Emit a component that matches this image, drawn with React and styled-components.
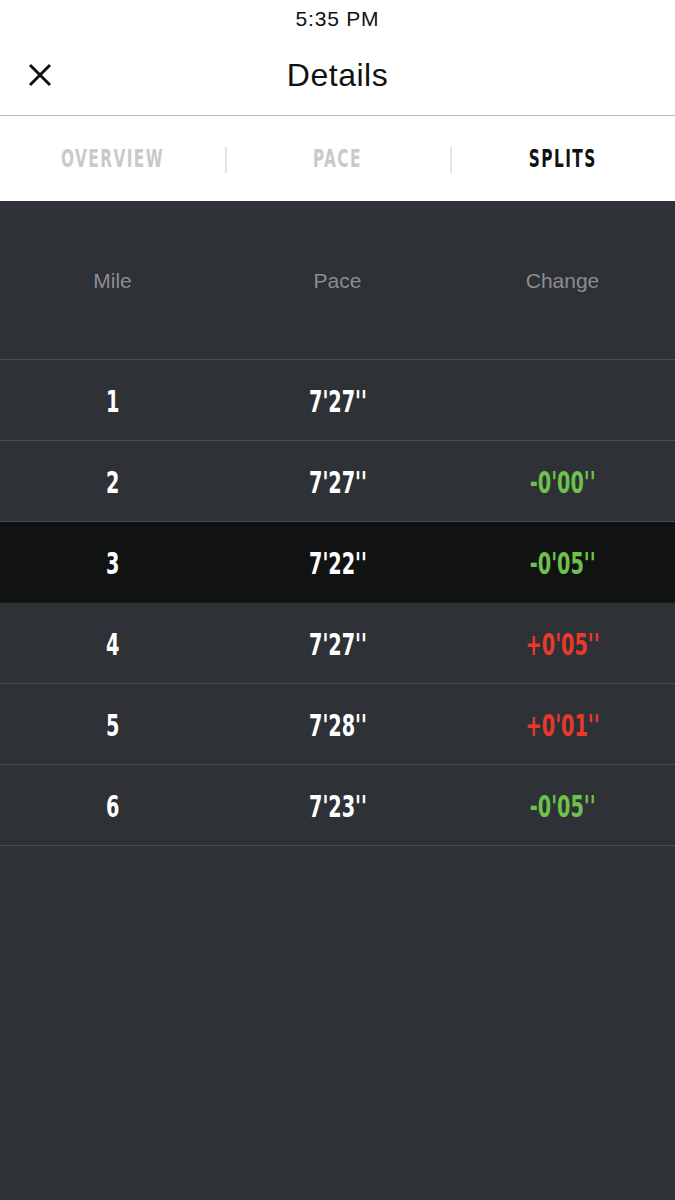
import React, { useState } from "react";
import styled, { createGlobalStyle } from "styled-components";

const GlobalStyle = createGlobalStyle`
  html, body {
    margin: 0;
    padding: 0;
    background: #2e3135;
  }
  body {
    font-family: "Liberation Sans", Arial, sans-serif;
  }
`;

const color = {
  dark: "#2e3135",
  highlight: "#111212",
  line: "#4a4d51",
  muted: "#8b8d90",
  green: "#6cc24a",
  red: "#e83a2b",
};

const Screen = styled.div`
  width: 675px;
  min-height: 1200px;
  display: flex;
  flex-direction: column;
  background: ${color.dark};
`;

const StatusBar = styled.div`
  height: 38px;
  background: #fff;
  display: flex;
  align-items: center;
  justify-content: center;
  font-size: 21px;
  color: #111;
  letter-spacing: 0.8px;
`;

const TopBar = styled.div`
  position: relative;
  height: 77px;
  background: #fff;
  display: flex;
  align-items: center;
  justify-content: center;
  border-bottom: 1px solid #b9b9b9;
`;

const CloseButton = styled.button`
  position: absolute;
  left: 26px;
  top: 23px;
  width: 28px;
  height: 28px;
  padding: 0;
  border: none;
  background: none;
  display: flex;
  align-items: center;
  justify-content: center;
  cursor: pointer;
`;

const Title = styled.h1`
  margin: 0;
  font-size: 32px;
  font-weight: normal;
  color: #111;
  letter-spacing: 0.5px;
  transform: translateY(-1px);
`;

const Tabs = styled.nav`
  height: 85px;
  background: #fff;
  display: grid;
  grid-template-columns: repeat(3, 1fr);
  align-items: center;
`;

const Tab = styled.div`
  position: relative;
  display: flex;
  justify-content: center;
  cursor: pointer;
  color: ${(p) => (p.active ? "#111" : "#c9c9c9")};
  &:not(:first-child):before {
    content: "";
    position: absolute;
    left: 0;
    top: 50%;
    width: 2px;
    height: 26px;
    margin-top: -12px;
    background: #e4e4e4;
  }
`;

const Condensed = styled.span`
  display: inline-block;
  font-family: "DejaVu Sans Condensed", "DejaVu Sans", sans-serif;
  font-weight: bold;
  font-size: ${(p) => p.size || 31}px;
  letter-spacing: ${(p) => p.spacing || 0}px;
  line-height: 1;
  transform: scaleX(${(p) => p.squeeze || 0.69});
  color: ${(p) => p.tone || "inherit"};
`;

const Table = styled.div`
  display: flex;
  flex-direction: column;
`;

const HeadRow = styled.div`
  height: 158px;
  display: grid;
  grid-template-columns: repeat(3, 1fr);
  align-items: center;
  border-bottom: 1px solid ${color.line};
`;

const HeadCell = styled.div`
  text-align: center;
  font-size: 21px;
  color: ${color.muted};
  transform: translateY(1px);
`;

const Row = styled.div`
  height: 80px;
  display: grid;
  grid-template-columns: repeat(3, 1fr);
  align-items: center;
  border-bottom: 1px solid ${(p) => (p.active ? "#1a1b1c" : color.line)};
  background: ${(p) => (p.active ? color.highlight : "transparent")};
  color: #fff;
  cursor: pointer;
`;

const Cell = styled.div`
  display: flex;
  justify-content: center;
  padding-top: 2px;
`;

const splits = [
  { mile: 1, pace: "7'27''", change: null },
  { mile: 2, pace: "7'27''", change: "-0'00''" },
  { mile: 3, pace: "7'22''", change: "-0'05''" },
  { mile: 4, pace: "7'27''", change: "+0'05''" },
  { mile: 5, pace: "7'28''", change: "+0'01''" },
  { mile: 6, pace: "7'23''", change: "-0'05''" },
];

const tabs = ["OVERVIEW", "PACE", "SPLITS"];

export default function App() {
  const [tab, setTab] = useState("SPLITS");
  const [selected, setSelected] = useState(3);

  return (
    <Screen>
      <GlobalStyle />
      <StatusBar>5:35 PM</StatusBar>
      <TopBar>
        <CloseButton aria-label="Close">
          <svg width="24" height="24" viewBox="0 0 24 24">
            <path d="M2 2 L22 22 M22 2 L2 22" stroke="#111" strokeWidth="3" />
          </svg>
        </CloseButton>
        <Title>Details</Title>
      </TopBar>
      <Tabs>
        {tabs.map((t) => (
          <Tab key={t} active={t === tab} onClick={() => setTab(t)}>
            <Condensed size={24} spacing={2} squeeze={0.71}>
              {t}
            </Condensed>
          </Tab>
        ))}
      </Tabs>
      <Table>
        <HeadRow>
          <HeadCell>Mile</HeadCell>
          <HeadCell>Pace</HeadCell>
          <HeadCell>Change</HeadCell>
        </HeadRow>
        {splits.map((s) => (
          <Row
            key={s.mile}
            active={s.mile === selected}
            onClick={() => setSelected(s.mile)}
          >
            <Cell>
              <Condensed>{s.mile}</Condensed>
            </Cell>
            <Cell>
              <Condensed>{s.pace}</Condensed>
            </Cell>
            <Cell>
              {s.change && (
                <Condensed
                  tone={s.change.startsWith("+") ? color.red : color.green}
                >
                  {s.change}
                </Condensed>
              )}
            </Cell>
          </Row>
        ))}
      </Table>
    </Screen>
  );
}
